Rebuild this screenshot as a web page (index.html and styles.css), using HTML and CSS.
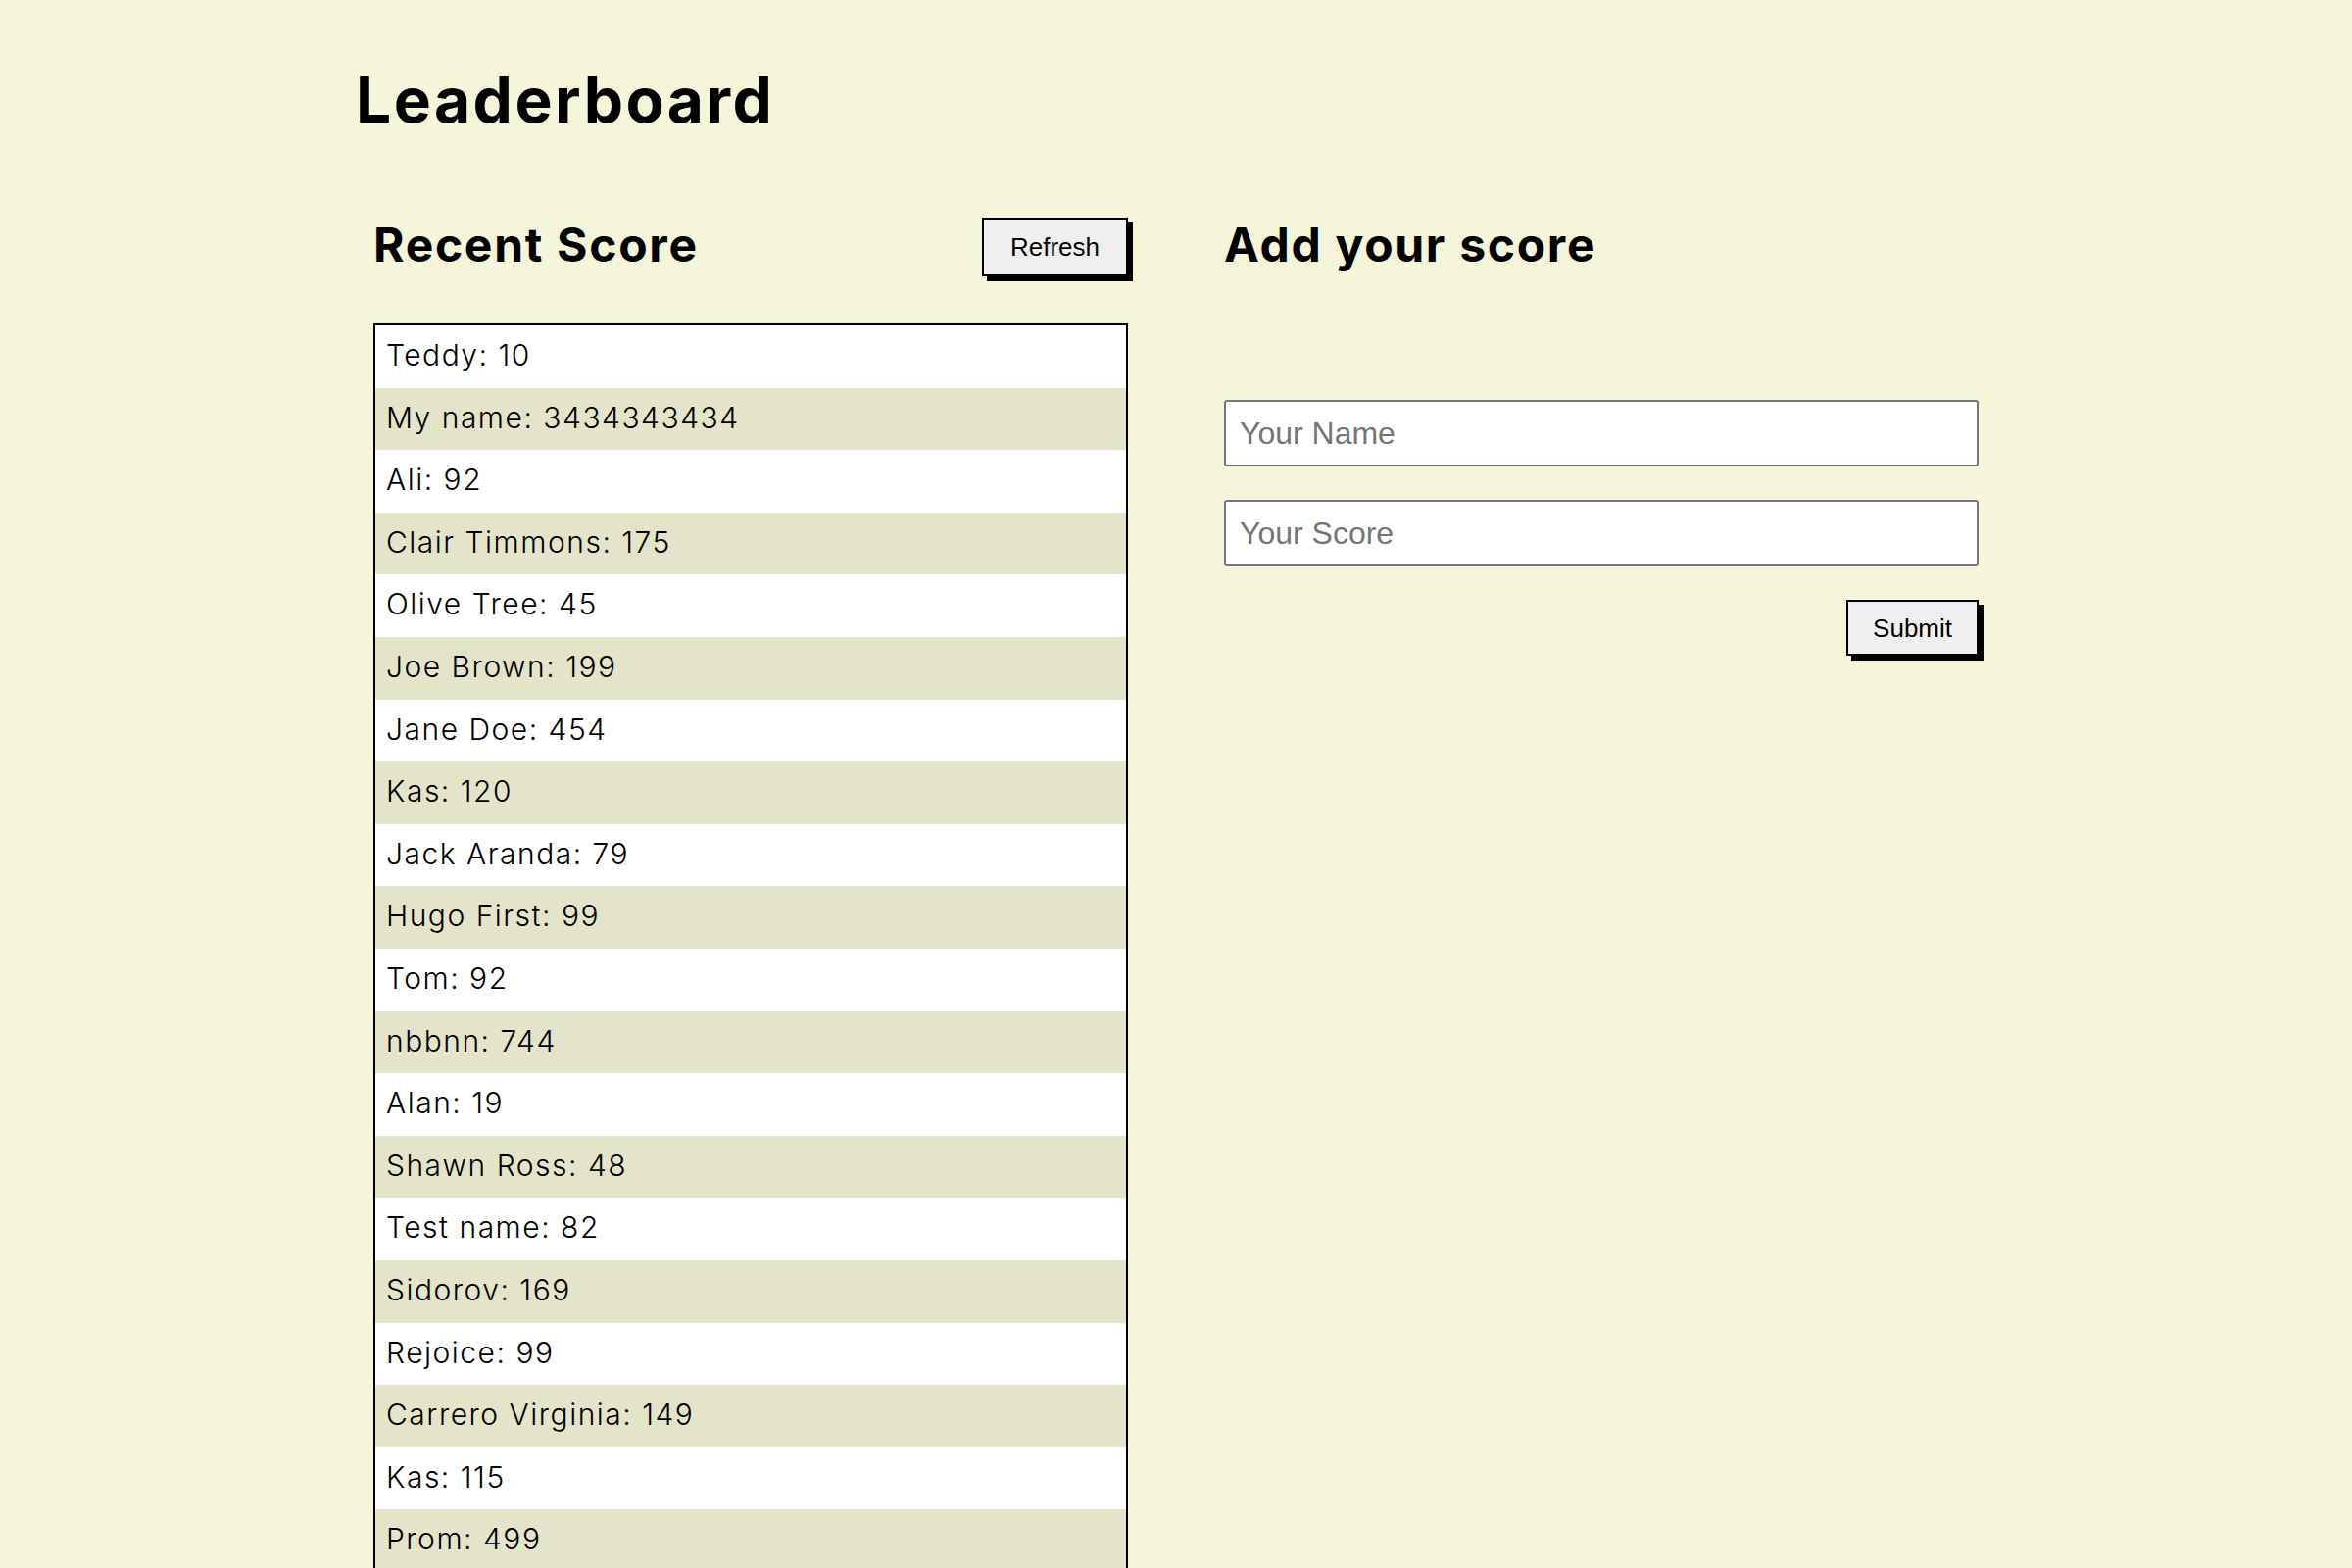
FILE: index.html
```html
<!DOCTYPE html>
<html lang="en">
<head>
<meta charset="utf-8">
<title>Leaderboard</title>
<link rel="stylesheet" href="styles.css">
</head>
<body>
<main class="page">
  <h1 class="title">Leaderboard</h1>
  <div class="columns">
    <section class="column">
      <div class="section-head">
        <h2 class="section-title">Recent Score</h2>
        <button class="btn" type="button">Refresh</button>
      </div>
      <ul class="score-list">
        <li class="score-item">Teddy: 10</li>
        <li class="score-item">My name: 3434343434</li>
        <li class="score-item">Ali: 92</li>
        <li class="score-item">Clair Timmons: 175</li>
        <li class="score-item">Olive Tree: 45</li>
        <li class="score-item">Joe Brown: 199</li>
        <li class="score-item">Jane Doe: 454</li>
        <li class="score-item">Kas: 120</li>
        <li class="score-item">Jack Aranda: 79</li>
        <li class="score-item">Hugo First: 99</li>
        <li class="score-item">Tom: 92</li>
        <li class="score-item">nbbnn: 744</li>
        <li class="score-item">Alan: 19</li>
        <li class="score-item">Shawn Ross: 48</li>
        <li class="score-item">Test name: 82</li>
        <li class="score-item">Sidorov: 169</li>
        <li class="score-item">Rejoice: 99</li>
        <li class="score-item">Carrero Virginia: 149</li>
        <li class="score-item">Kas: 115</li>
        <li class="score-item">Prom: 499</li>
      </ul>
    </section>
    <section class="column">
      <div class="section-head">
        <h2 class="section-title">Add your score</h2>
      </div>
      <form class="score-form">
        <input class="field" type="text" placeholder="Your Name">
        <input class="field" type="text" placeholder="Your Score">
        <button class="btn btn-submit" type="button">Submit</button>
      </form>
    </section>
  </div>
</main>
</body>
</html>
```

FILE: styles.css
```css
html, body {
  margin: 0;
  padding: 0;
}

body {
  background: #f5f5dc;
  color: #000;
  font-family: Inter, "Noto Sans", sans-serif;
}

.page {
  width: 1680px;
  margin: 0 auto;
}

.title {
  margin: 70px 0 0 3px;
  font-size: 64px;
  line-height: 64px;
  font-weight: 700;
  letter-spacing: 2.5px;
}

.columns {
  display: flex;
  gap: 98px;
  padding: 88px 21px 0;
}

.column {
  width: 770px;
  flex: 0 0 770px;
}

.section-head {
  display: flex;
  align-items: center;
  justify-content: space-between;
  height: 60px;
}

.section-title {
  margin: 0;
  font-size: 48px;
  line-height: 48px;
  font-weight: 700;
  letter-spacing: 1.7px;
  position: relative;
  top: -2px;
}

.btn {
  font-family: "Liberation Sans", Arial, sans-serif;
  font-size: 26px;
  line-height: 30px;
  color: #000;
  background: #efefef;
  border: 2px solid #000;
  border-radius: 0;
  padding: 13px 27px;
  box-shadow: 5px 5px 0 #000;
  cursor: pointer;
}

.score-list {
  list-style: none;
  margin: 48px 0 0;
  padding: 0;
  border: 2px solid #000;
  background: #fff;
}

.score-item {
  font-size: 30px;
  font-weight: 300;
  letter-spacing: 1.5px;
  line-height: 61.6px;
  padding: 0 11px 2px;
}

.score-item:nth-child(even) {
  background: #e4e4cb;
}

.score-form {
  display: flex;
  flex-direction: column;
  align-items: stretch;
  gap: 34px;
  margin-top: 126px;
}

.field {
  box-sizing: border-box;
  height: 68px;
  width: 100%;
  margin: 0;
  padding: 0 14px;
  border: 2px solid #767676;
  border-radius: 3px;
  background: #fff;
  font-family: "Liberation Sans", Arial, sans-serif;
  font-size: 32px;
  color: #000;
}

.field::placeholder {
  color: #757575;
}

.btn-submit {
  align-self: flex-end;
  margin-top: 0;
  padding: 11.5px 25px;
}
```
